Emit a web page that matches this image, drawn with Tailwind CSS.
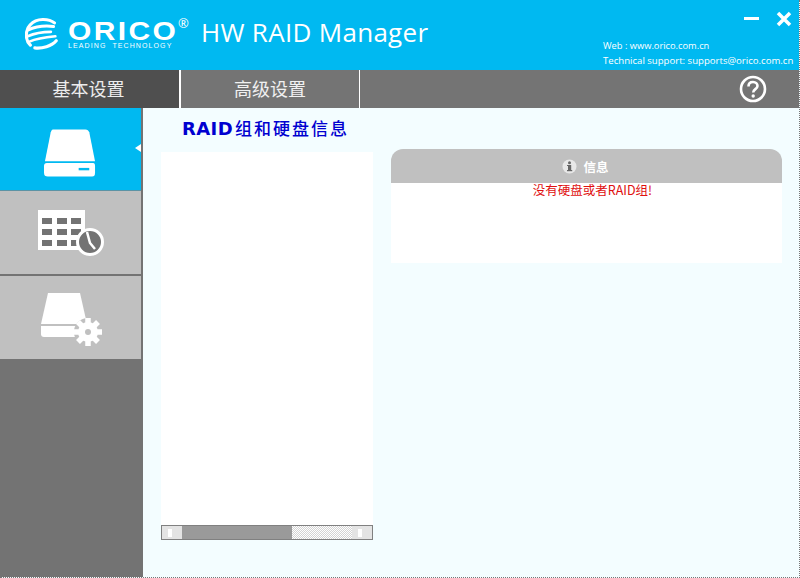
<!DOCTYPE html>
<html>
<head>
<meta charset="utf-8">
<title>HW RAID Manager</title>
<script src="https://cdn.jsdelivr.net/npm/@tailwindcss/browser@4"></script>
</head>
<body class="bg-[#f3fdff]">
<div class="w-[800px] h-[578px] flex flex-col overflow-hidden border-r border-b border-dotted border-[#777] font-['Open_Sans','Noto_Sans_CJK_SC',sans-serif]">
  <!-- header -->
  <div class="h-[70px] shrink-0 bg-[#00b9f1] flex text-white relative">
    <div class="w-[186px] pl-[25px] pt-[17px] flex gap-[10px]">
      <svg class="w-[33px] h-[35px] shrink-0" viewBox="0 0 37 36" fill="none" stroke="#fff" stroke-linecap="round">
        <path d="M33 5C27 0 13-1 6 7C0 13 0 24 6 30" stroke-width="3.5"/>
        <path d="M3 13C12 9 24 8 32 9" stroke-width="3.5"/>
        <path d="M3 20C12 16 22 15 29 15" stroke-width="3"/>
        <path d="M5 26C14 22 24 21 34 20" stroke-width="3"/>
        <path d="M11 33C19 34 30 31 35 25" stroke-width="3.5"/>
      </svg>
      <div class="flex flex-col relative mt-[4px]">
        <span class="font-['Liberation_Sans'] font-bold text-[25px] leading-[21px] tracking-[2px] scale-x-[1.2] origin-left">ORICO</span>
        <span class="font-['Liberation_Sans'] text-[7px] leading-[7px] tracking-[1.1px] whitespace-pre">LEADING  TECHNOLOGY</span>
        <span class="absolute left-[110px] top-[-5px] text-[13px] leading-[14px]">®</span>
      </div>
    </div>
    <div class="ml-[15px] pt-[14px] text-[26px] leading-[36px] tracking-[0.3px] whitespace-nowrap">HW RAID Manager</div>
    <div class="absolute right-0 top-0 w-[197px] h-[70px]">
      <div class="absolute left-[142px] top-[17px] w-[15px] h-[3px] bg-white"></div>
      <svg class="absolute left-[174px] top-[11px] w-[16px] h-[16px]" viewBox="0 0 16 16" stroke="#fff" stroke-width="3.5"><path d="M2 2L14 14M14 2L2 14"/></svg>
      <div class="absolute left-[1px] top-[39px] text-[9.3px] leading-[14px] whitespace-nowrap">Web : www.orico.com.cn</div>
      <div class="absolute left-[1px] top-[53px] text-[9.6px] leading-[15px] whitespace-nowrap">Technical support: supports@orico.com.cn</div>
    </div>
  </div>
  <!-- tabs -->
  <div class="h-[38px] shrink-0 bg-[#747474] flex items-center text-white/90 text-[18px]">
    <div class="w-[179px] h-full bg-[#4f4f4f] flex items-center justify-center pr-[2px]">基本设置</div>
    <div class="w-[2px] h-full bg-white"></div>
    <div class="w-[178px] h-full flex items-center justify-center">高级设置</div>
    <div class="w-px h-full bg-white"></div>
    <svg class="ml-[379px] w-[28px] h-[28px]" viewBox="0 0 28 28" fill="none" stroke="#fff">
      <circle cx="14" cy="14" r="12" stroke-width="2.6"/>
      <path d="M9.5 11.5C9.5 8.5 11.5 7 14 7C16.8 7 18.5 8.8 18.5 11C18.5 14 14.2 14.3 14.2 17.5" stroke-width="2.6"/>
      <circle cx="14.2" cy="21" r="1.7" fill="#fff" stroke="none"/>
    </svg>
  </div>
  <div class="flex-1 flex min-h-0">
    <!-- sidebar -->
    <div class="w-[143px] shrink-0 bg-[#737373] flex flex-col">
      <div class="w-[141px] h-[82px] bg-[#00b9f1] relative flex items-center justify-center">
        <svg class="w-[52px] h-[49px] mt-[7px] ml-[-1px]" viewBox="0 0 54 50" fill="#fff">
          <path d="M9 1H43Q46 1 47 4L53 34H1L7 4Q8 1 9 1Z"/>
          <path d="M3 36H51Q53 36 53 39V46Q53 50 50 50H4Q0 50 0 46V39Q0 36 3 36Z"/>
          <rect x="36" y="41" width="11" height="2.5" fill="#00b9f1"/>
        </svg>
        <div class="absolute right-0 top-[36px] w-0 h-0 border-y-[4px] border-y-transparent border-r-[6px] border-r-white"></div>
      </div>
      <div class="w-[141px] h-px bg-[#5b93a5]"></div>
      <div class="w-[141px] h-[83px] bg-[#c0c0c0] flex items-center justify-center">
        <svg class="w-[66px] h-[46px] mt-[1px] ml-[1px]" viewBox="0 0 66 46">
          <rect x="0" y="0" width="47" height="40" fill="#fff"/>
          <g fill="#737373">
            <rect x="4" y="8" width="10" height="6"/><rect x="19" y="8" width="10" height="6"/><rect x="33" y="8" width="10" height="6"/>
            <rect x="4" y="19" width="10" height="6"/><rect x="19" y="19" width="10" height="6"/><rect x="33" y="19" width="10" height="6"/>
            <rect x="4" y="30" width="10" height="6"/><rect x="19" y="30" width="10" height="6"/><rect x="33" y="30" width="10" height="6"/>
          </g>
          <circle cx="52" cy="32" r="12.5" fill="#737373" stroke="#fff" stroke-width="3"/>
          <path d="M49 22L52 33L57 39" fill="none" stroke="#fff" stroke-width="2.5"/>
        </svg>
      </div>
      <div class="h-[2px]"></div>
      <div class="w-[141px] h-[83px] bg-[#c0c0c0] flex items-center justify-center">
        <svg class="w-[62px] h-[54px] mt-[5px] ml-[3px]" viewBox="0 0 62 54" fill="#fff">
          <path d="M7 0H39L46 31H0Z"/>
          <path d="M0 33H46V44H3Q0 44 0 41Z"/>
          <circle cx="47" cy="39" r="14" fill="#c0c0c0"/>
          <g stroke="#fff" stroke-width="5.5">
            <path d="M47 25V53M33 39H61M37 29L57 49M37 49L57 29"/>
          </g>
          <circle cx="47" cy="39" r="10" fill="#fff"/>
          <circle cx="47" cy="39" r="3" fill="#c0c0c0"/>
        </svg>
      </div>
    </div>
    <!-- main -->
    <div class="flex-1 bg-[#f3fdff] relative">
      <h1 class="ml-[39px] mt-[9px] h-[22px] text-[18px] leading-[22px] font-bold text-[#0000d0] tracking-[0.4px] font-['DejaVu_Sans','Noto_Sans_CJK_SC',sans-serif] whitespace-nowrap">RAID<span class="ml-[2px] text-[17px] font-medium font-['Noto_Sans_CJK_SC'] tracking-[2px]">组和硬盘信息</span></h1>
      <div class="flex mt-[10px] ml-[18px] gap-[18px] items-start">
        <div class="w-[212px] mt-[3px]">
          <div class="h-[373px] bg-white"></div>
          <!-- scrollbar -->
          <div class="h-[15px] border border-[#808080] flex bg-[repeating-conic-gradient(#d4d4d4_0_25%,#fff_0_50%)] bg-[length:2px_2px]">
            <div class="w-[20px] bg-[#e4e4e4] flex items-center pl-[6px]"><div class="w-[4px] h-[8px] bg-white"></div></div>
            <div class="w-[110px] bg-[#9a9a9a]"></div>
            <div class="flex-1"></div>
            <div class="w-[20px] bg-[#e4e4e4] flex items-center pl-[6px]"><div class="w-[4px] h-[8px] bg-white"></div></div>
          </div>
        </div>
        <div class="w-[391px]">
          <div class="h-[34px] bg-[#c0c0c0] rounded-t-[12px] flex items-center justify-center gap-[6px] text-white text-[12.5px] font-bold pt-[2px] pr-[2px]">
            <svg class="w-[15px] h-[15px] mb-[2px]" viewBox="0 0 15 15">
              <circle cx="7.5" cy="7.5" r="7" fill="#e8e8e8"/>
              <rect x="6" y="6" width="3.2" height="5.5" fill="#666"/>
              <rect x="5" y="11" width="5.2" height="1.2" fill="#666"/>
              <rect x="5" y="6" width="2" height="1" fill="#666"/>
              <circle cx="7.5" cy="3.8" r="1.5" fill="#666"/>
            </svg>
            <span class="font-['Noto_Sans_CJK_SC']">信息</span>
          </div>
          <div class="h-[80px] bg-white text-center text-[12.5px] leading-[14px] text-[#e01010] font-['Noto_Sans_CJK_SC'] pl-[12px]">没有硬盘或者RAID组!</div>
        </div>
      </div>
    </div>
  </div>
</div>
</body>
</html>
